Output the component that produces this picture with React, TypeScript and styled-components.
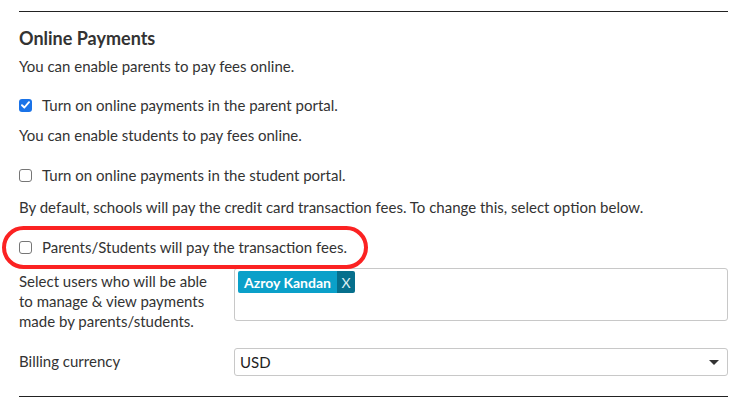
import React from "react";
import styled, { createGlobalStyle } from "styled-components";

const Global = createGlobalStyle`
  html, body { margin: 0; padding: 0; background: #fff; }
  body { font-family: Lato, "Liberation Sans", Arial, sans-serif; color: #333; }
`;

const Page = styled.div`
  width: 743px;
  height: 408px;
  padding: 11px 15px 0 19px;
  box-sizing: border-box;
  position: relative;
`;

const Section = styled.section`
  border-top: 1px solid #222;
  border-bottom: 1px solid #222;
  padding: 14px 0 20px;
  display: flex;
  flex-direction: column;
`;

const Heading = styled.h2`
  margin: 0;
  font-size: 18px;
  line-height: 24px;
  font-weight: 700;
  color: #333;
`;

const Text = styled.p<{ $gap: number }>`
  margin: ${(p) => p.$gap}px 0 0;
  font-size: 15px;
  line-height: 20px;
  color: #333;
`;

const CheckRow = styled.label<{ $gap: number }>`
  margin-top: ${(p) => p.$gap}px;
  display: flex;
  align-items: center;
  gap: 10px;
  font-size: 15px;
  line-height: 20px;
  color: #333;
`;

const Box = styled.span<{ $checked?: boolean }>`
  width: 13px;
  height: 13px;
  box-sizing: border-box;
  border-radius: 3px;
  flex: none;
  display: flex;
  align-items: center;
  justify-content: center;
  border: ${(p) => (p.$checked ? "none" : "1px solid #767676")};
  background: ${(p) => (p.$checked ? "#1a73e8" : "#fff")};
`;

const FormRow = styled.div<{ $gap: number }>`
  margin-top: ${(p) => p.$gap}px;
  display: grid;
  grid-template-columns: 215px 1fr;
  align-items: start;
`;

const FieldLabel = styled.div`
  padding-top: 3px;
  font-size: 15px;
  line-height: 20px;
  color: #333;
`;

const MultiBox = styled.div`
  height: 53px;
  box-sizing: border-box;
  border: 1px solid #c8c8c8;
  border-radius: 3px;
  padding: 2px 3px;
  display: flex;
  align-items: flex-start;
`;

const Tag = styled.span`
  display: inline-flex;
  height: 22px;
  border-radius: 2px;
  overflow: hidden;
  font-size: 14px;
  font-weight: 700;
  color: #fff;
`;

const TagText = styled.span`
  background: #0aa0c9;
  padding: 0 6px 0 6px;
  display: flex;
  align-items: center;
`;

const TagX = styled.span`
  background: #066f8c;
  width: 18px;
  display: flex;
  align-items: center;
  justify-content: center;
  font-weight: 400;
  color: #dbeef4;
`;

const Select = styled.div`
  height: 28px;
  box-sizing: border-box;
  border: 1px solid #c8c8c8;
  border-radius: 3px;
  padding: 0 8px 0 5px;
  display: flex;
  align-items: center;
  justify-content: space-between;
  font-size: 15px;
  color: #222;
`;

const Caret = styled.span`
  width: 0;
  height: 0;
  border-left: 5px solid transparent;
  border-right: 5px solid transparent;
  border-top: 5px solid #333;
`;

const Highlight = styled.div`
  position: absolute;
  left: 2px;
  top: 226px;
  width: 366px;
  height: 43px;
  box-sizing: border-box;
  border: 4px solid #fb2222;
  border-radius: 22px;
  pointer-events: none;
`;

const Check = () => (
  <svg width="9" height="8" viewBox="0 0 9 8">
    <path d="M1 4.2 L3.4 6.5 L8 1.2" fill="none" stroke="#fff" strokeWidth="1.9" strokeLinecap="round" strokeLinejoin="round" />
  </svg>
);

export default function App() {
  return (
    <>
      <Global />
      <Page>
        <Section>
          <Heading>Online Payments</Heading>
          <Text $gap={6}>You can enable parents to pay fees online.</Text>
          <CheckRow $gap={19}>
            <Box $checked>
              <Check />
            </Box>
            Turn on online payments in the parent portal.
          </CheckRow>
          <Text $gap={10}>You can enable students to pay fees online.</Text>
          <CheckRow $gap={20}>
            <Box />
            Turn on online payments in the student portal.
          </CheckRow>
          <Text $gap={12}>
            By default, schools will pay the credit card transaction fees. To change this, select option below.
          </Text>
          <CheckRow $gap={20}>
            <Box />
            Parents/Students will pay the transaction fees.
          </CheckRow>
          <FormRow $gap={11}>
            <FieldLabel>
              Select users who will be able
              <br />
              to manage &amp; view payments
              <br />
              made by parents/students.
            </FieldLabel>
            <MultiBox>
              <Tag>
                <TagText>Azroy Kandan</TagText>
                <TagX>X</TagX>
              </Tag>
            </MultiBox>
          </FormRow>
          <FormRow $gap={17}>
            <FieldLabel>Billing currency</FieldLabel>
            <Select>
              USD
              <Caret />
            </Select>
          </FormRow>
        </Section>
        <Highlight />
      </Page>
    </>
  );
}
